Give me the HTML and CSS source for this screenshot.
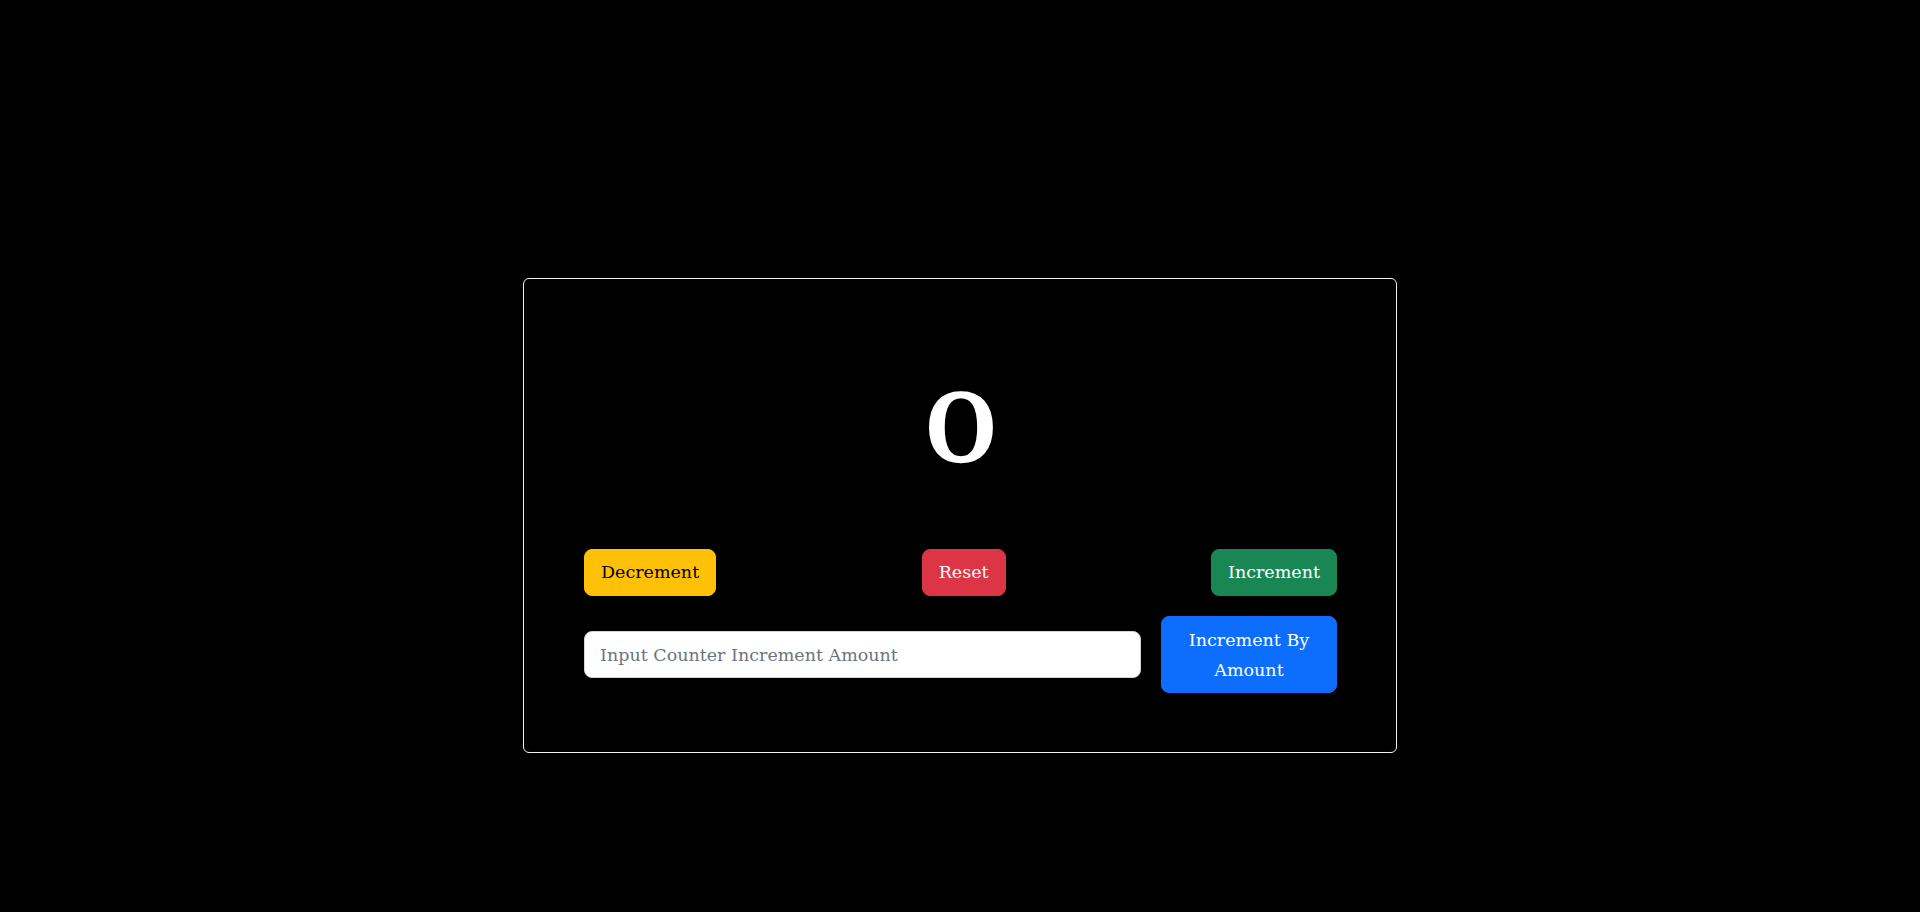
FILE: index.html
```html
<!DOCTYPE html>
<html lang="en">
<head>
<meta charset="utf-8">
<title>Counter</title>
<link rel="stylesheet" href="styles.css">
</head>
<body>
  <main class="page">
    <section class="card">
      <h1 class="count"><span class="count-digit">0</span></h1>
      <div class="actions">
        <button class="btn btn-warning">Decrement</button>
        <button class="btn btn-danger">Reset</button>
        <button class="btn btn-success">Increment</button>
      </div>
      <div class="amount-row">
        <input class="amount-input" type="text" placeholder="Input Counter Increment Amount">
        <button class="btn btn-primary btn-amount">Increment By Amount</button>
      </div>
    </section>
  </main>
</body>
</html>
```

FILE: styles.css
```css
html, body {
  margin: 0;
  padding: 0;
  background: #000;
  color: #fff;
  font-family: "DejaVu Serif", "Liberation Serif", serif;
}

.page {
  padding-top: 278px;
  display: flex;
  justify-content: center;
}

.card {
  box-sizing: border-box;
  width: 874px;
  height: 475px;
  border: 1px solid #f2f2f2;
  border-radius: 6px;
  padding: 60px 59px 59px 60px;
  display: flex;
  flex-direction: column;
}

.count {
  margin: 43px 0 72px;
  font-size: 91px;
  line-height: 95px;
  font-weight: 400;
  text-align: center;
}

.count-digit {
  display: inline-block;
  transform: scaleX(1.32);
  -webkit-text-stroke: 2.5px #fff;
}

.actions {
  display: flex;
  justify-content: space-between;
  margin-bottom: 20px;
}

.btn {
  font-family: "DejaVu Serif", "Liberation Serif", serif;
  font-size: 17.5px;
  line-height: 29px;
  padding: 8px 16px;
  border: 1px solid transparent;
  border-radius: 8px;
  color: #fff;
  cursor: pointer;
}

.btn-warning { background: #ffc107; border-color: #ffc107; color: #000; }
.btn-danger { background: #dc3545; border-color: #dc3545; }
.btn-success { background: #198754; border-color: #198754; }
.btn-primary { background: #0d6efd; border-color: #0d6efd; }

.amount-row {
  display: flex;
  align-items: center;
  gap: 20px;
}

.amount-input {
  flex: 1;
  box-sizing: border-box;
  height: 47px;
  padding: 8px 15px;
  border: 1px solid #ced4da;
  border-radius: 8px;
  background: #fff;
  font-family: "DejaVu Serif", "Liberation Serif", serif;
  font-size: 17.5px;
  color: #212529;
  outline: none;
}

.amount-input::placeholder {
  color: #6c757d;
}

.btn-amount {
  width: 176px;
  box-sizing: border-box;
  line-height: 30px;
  padding: 7.5px 16px;
}
```
